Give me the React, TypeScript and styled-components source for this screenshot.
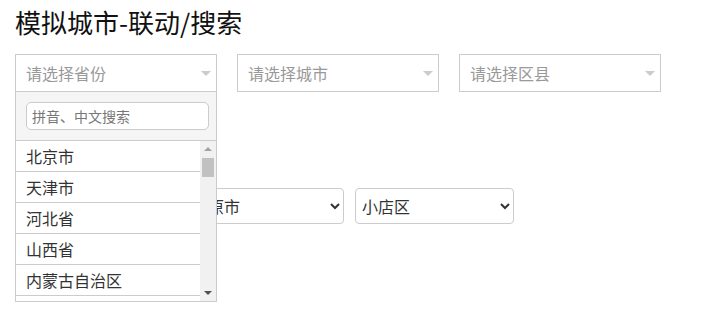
import React from "react";
import styled, { createGlobalStyle } from "styled-components";

const GlobalStyle = createGlobalStyle`
  html, body { margin: 0; padding: 0; background: #fff; }
  body {
    font-family: "Noto Sans CJK SC", "Noto Sans", sans-serif;
    color: #333;
  }
`;

const Page = styled.div`
  box-sizing: border-box;
  min-height: 100vh;
  padding: 0 15px;
`;

const Title = styled.h3`
  margin: 4px 0 0;
  font-size: 26px;
  line-height: 36px;
  font-weight: 400;
  color: #111;
`;

const PickerRow = styled.div`
  display: flex;
  gap: 20px;
  margin-top: 14px;
`;

const PickerWrap = styled.div`
  position: relative;
  width: 202px;
`;

const PickerBox = styled.div`
  box-sizing: border-box;
  height: 38px;
  border: 1px solid #ccc;
  padding: 0 10px;
  display: flex;
  align-items: center;
  justify-content: space-between;
  font-size: 16px;
  color: #999;
  background: #fff;
`;

const Caret = styled.span`
  width: 0;
  height: 0;
  border-left: 5.5px solid transparent;
  border-right: 5.5px solid transparent;
  border-top: 5px solid #ccc;
  margin-right: -5px;
`;

const Dropdown = styled.div`
  position: absolute;
  left: 0;
  top: 100%;
  width: 202px;
  box-sizing: border-box;
  border: 1px solid #ccc;
  border-top: none;
  background: #fff;
  z-index: 10;
`;

const SearchArea = styled.div`
  background: #f5f5f5;
  padding: 10px 0 10px 10px;
  border-bottom: 1px solid #ccc;
`;

const SearchInput = styled.input`
  box-sizing: border-box;
  width: 183px;
  height: 28px;
  border: 1px solid #ccc;
  border-radius: 5px;
  padding: 0 5px;
  font-family: inherit;
  font-size: 14px;
  background: #fff;
  outline: none;
  &::placeholder { color: #777; }
`;

const ListFrame = styled.div`
  display: flex;
  height: 160px;
`;

const List = styled.ul`
  flex: 1;
  min-width: 0;
  list-style: none;
  margin: 0;
  padding: 0;
  overflow: hidden;
`;

const Item = styled.li`
  height: 30px;
  line-height: 30px;
  padding: 0 10px;
  border-bottom: 1px solid #ccc;
  font-size: 16px;
  color: #333;
  white-space: nowrap;
`;

const ScrollTrack = styled.div`
  width: 16px;
  flex: none;
  background: #f1f1f1;
  display: flex;
  flex-direction: column;
`;

const ScrollArrow = styled.div<{ $down?: boolean; $dim?: boolean }>`
  height: 16px;
  flex: none;
  display: flex;
  align-items: center;
  justify-content: center;
  &::after {
    content: "";
    width: 0;
    height: 0;
    border-left: 4px solid transparent;
    border-right: 4px solid transparent;
    ${(p) =>
      p.$down
        ? `border-top: 4px solid ${p.$dim ? "#a3a3a3" : "#505050"};`
        : `border-bottom: 4px solid ${p.$dim ? "#a3a3a3" : "#505050"};`}
  }
`;

const ScrollThumb = styled.div`
  height: 19px;
  margin: 1px 2px 0;
  background: #c1c1c1;
  flex: none;
`;

const ScrollSpace = styled.div`
  flex: 1;
`;

const SelectRow = styled.div`
  display: flex;
  gap: 11px;
  margin-top: 96px;
`;

const NativeSelect = styled.select`
  box-sizing: border-box;
  width: 159px;
  height: 36px;
  border: 1px solid #ccc;
  border-radius: 4px;
  background: #fff;
  font-family: inherit;
  font-size: 16px;
  color: #333;
  padding: 0 2px;
`;

const provinces = [
  "北京市", "天津市", "河北省", "山西省", "内蒙古自治区", "辽宁省", "吉林省",
  "黑龙江省", "上海市", "江苏省", "浙江省", "安徽省", "福建省", "江西省",
  "山东省", "河南省", "湖北省", "湖南省", "广东省", "广西壮族自治区", "海南省",
  "重庆市", "四川省", "贵州省", "云南省", "西藏自治区", "陕西省", "甘肃省",
  "青海省", "宁夏回族自治区", "新疆维吾尔自治区", "台湾省", "香港特别行政区",
  "澳门特别行政区",
];

export default function App() {
  return (
    <Page>
      <GlobalStyle />
      <Title>模拟城市-联动/搜索</Title>
      <PickerRow>
        <PickerWrap>
          <PickerBox>
            请选择省份
            <Caret />
          </PickerBox>
          <Dropdown>
            <SearchArea>
              <SearchInput placeholder="拼音、中文搜索" />
            </SearchArea>
            <ListFrame>
              <List>
                {provinces.slice(0, 6).map((p) => (
                  <Item key={p}>{p}</Item>
                ))}
              </List>
              <ScrollTrack>
                <ScrollArrow $dim />
                <ScrollThumb />
                <ScrollSpace />
                <ScrollArrow $down />
              </ScrollTrack>
            </ListFrame>
          </Dropdown>
        </PickerWrap>
        <PickerWrap>
          <PickerBox>
            请选择城市
            <Caret />
          </PickerBox>
        </PickerWrap>
        <PickerWrap>
          <PickerBox>
            请选择区县
            <Caret />
          </PickerBox>
        </PickerWrap>
      </PickerRow>
      <SelectRow>
        <NativeSelect defaultValue="山西省">
          {provinces.map((p) => (
            <option key={p}>{p}</option>
          ))}
        </NativeSelect>
        <NativeSelect defaultValue="太原市">
          <option>太原市</option>
          <option>大同市</option>
          <option>阳泉市</option>
        </NativeSelect>
        <NativeSelect defaultValue="小店区">
          <option>小店区</option>
          <option>迎泽区</option>
          <option>杏花岭区</option>
        </NativeSelect>
      </SelectRow>
    </Page>
  );
}
